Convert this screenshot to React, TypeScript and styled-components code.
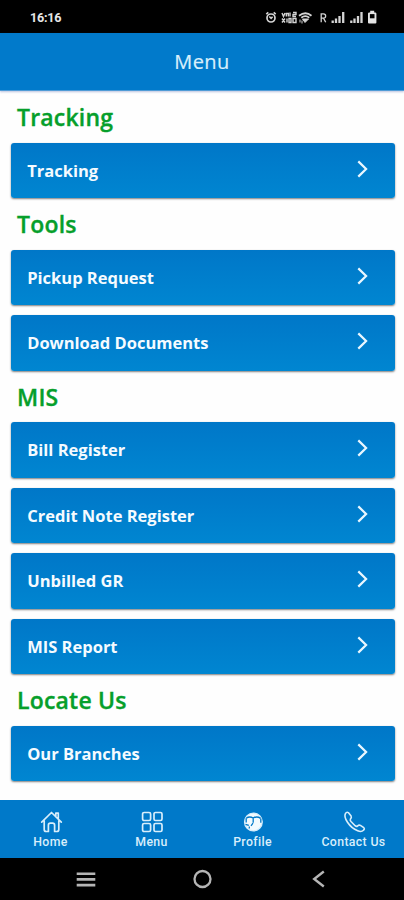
import React from "react";
import styled, { createGlobalStyle } from "styled-components";

const GlobalStyle = createGlobalStyle`
  * { box-sizing: border-box; }
  body { margin: 0; background: #fefefe; }
`;

const Screen = styled.div`
  display: flex;
  flex-direction: column;
  width: 404px;
  height: 900px;
  overflow: hidden;
  background: #fefefe;
  font-family: "Open Sans", "Noto Sans", sans-serif;
`;

const StatusBar = styled.div`
  flex: none;
  height: 33px;
  display: flex;
  align-items: center;
  justify-content: space-between;
  padding: 2px 27px 0 30px;
  background: #000;
`;

const Clock = styled.span`
  color: #e6e6e6;
  font: 700 12.6px/16px Roboto, sans-serif;
  letter-spacing: -0.25px;
`;

const StatusIcons = styled.svg`
  display: block;
  width: 112px;
  height: 16px;
`;

const Header = styled.header`
  flex: none;
  height: 58px;
  display: flex;
  align-items: center;
  justify-content: center;
  background: #017acb;
  border-bottom: 1px solid #4f9bd6;
  box-shadow: 0 1px 2px rgba(60, 80, 160, 0.35);
  color: #d9effb;
  font-size: 20px;
  letter-spacing: 0.45px;
  -webkit-text-stroke: 0.2px currentColor;
`;

const Content = styled.main`
  flex: 1;
  min-height: 0;
  padding: 0.3px 9.5px 0 11px;
`;

const SectionTitle = styled.h2`
  margin: 0;
  height: 51.6px;
  padding: 0 0 0 6px;
  color: #069f2b;
  font-size: 23px;
  font-weight: 600;
  line-height: 52px;
  letter-spacing: 0.2px;
  -webkit-text-stroke: 0.35px currentColor;
`;

const Items = styled.div`
  display: flex;
  flex-direction: column;
  gap: 10.15px;
`;

const ItemButton = styled.button`
  display: flex;
  align-items: center;
  justify-content: space-between;
  width: 100%;
  height: 55.4px;
  padding: 0 25.5px 0 16.2px;
  border: 0;
  border-radius: 3px;
  background: linear-gradient(#0077c8, #0086d1);
  box-shadow: 0 1px 2px rgba(0, 0, 0, 0.5);
  color: #f5fbff;
  font: 700 16.5px/24px "Open Sans", sans-serif;
  text-align: left;
`;

const Chevron = styled.svg`
  width: 13px;
  height: 18px;
  margin-top: -4px;
`;

const TabBar = styled.nav`
  flex: none;
  height: 58px;
  display: grid;
  grid-template-columns: repeat(4, 1fr);
  background: #0079c9;
`;

const Tab = styled.a`
  display: flex;
  flex-direction: column;
  align-items: center;
  padding-top: 9.5px;
  color: #d8eefb;
  font: 500 12.3px/16px Roboto, sans-serif;
  letter-spacing: 0.35px;
  white-space: nowrap;
`;

const TabIcon = styled.svg`
  width: 24px;
  height: 24px;
`;

const SystemBar = styled.div`
  flex: none;
  height: 42px;
  display: grid;
  grid-template-columns: 172px 60px 172px;
  align-items: center;
  justify-items: center;
  background: #000;
`;

const SystemIcon = styled.svg`
  width: 24px;
  height: 24px;
`;

const sections = [
  { title: "Tracking", items: ["Tracking"] },
  { title: "Tools", items: ["Pickup Request", "Download Documents"] },
  { title: "MIS", items: ["Bill Register", "Credit Note Register", "Unbilled GR", "MIS Report"] },
  { title: "Locate Us", items: ["Our Branches"] },
];

const StatusGlyphs = () => (
  <StatusIcons viewBox="265 9.5 112 16" fill="none" stroke="#d4d4d4">
    <circle cx="271" cy="17.5" r="4" strokeWidth="1.7" />
    <path d="M266.3 13.7l2-1.8M275.7 13.7l-2-1.8M269.3 16l1.8 1.8 1.5-1.6" strokeWidth="1.6" />
    <path d="M282 12.5l1.5 3.5 1.5-3.5M286.3 16v-3h2v3M290 12v4M293 12h3v2h-3v2h3M282 18l3 4M285 18l-3 4M287 18v4M289 18h2v4h-2zM293 18v4h3v-4z" strokeWidth="1.4" />
    <path d="M299 15.2q6.5-5 12.5 0M301.3 17.2q4-3 8 0" strokeWidth="1.8" />
    <path d="M302.5 18.5h6L305 22zM300 19v3M302 20v3" fill="#d4d4d4" strokeWidth="1" />
    <path d="M321.2 21.8v-8.5h2.3a2 2 0 0 1 0 4.3h-2.3M323.5 17.6l2.2 4.2" strokeWidth="1.3" />
    <path d="M332.7 20v2.5M336 18v4.5M339.5 15.5v7M343.2 11.5v11M351.3 20v2.5M354.5 18v4.5M358 15.5v7M361.5 11.5v11" strokeWidth="2.3" />
    <path d="M370.2 10.3h4v1.7h1a1.2 1.2 0 0 1 1.2 1v9a1 1 0 0 1-1 1h-6.4a1 1 0 0 1-1-1v-9a1.2 1.2 0 0 1 1.2-1h1z" fill="#e4e4e4" stroke="none" />
    <rect x="369.9" y="13.6" width="4.6" height="4.2" fill="#000" stroke="none" />
  </StatusIcons>
);

const HomeIcon = () => (
  <TabIcon viewBox="-0.5 0 24 24" fill="none" stroke="currentColor" strokeWidth="1.7" strokeLinecap="round" strokeLinejoin="round">
    <path d="M2.2 12.2 12 2.5l9.8 9.7M16.3 5.8V3.2h2.5v5.2M4.7 10.5v9q0 2 2 2h2.2v-6.3q0-2 2-2h2.2q2 0 2 2v6.3h2.2q2 0 2-2v-9" />
  </TabIcon>
);

const GridIcon = () => (
  <TabIcon viewBox="0 -0.5 24 24" fill="none" stroke="currentColor" strokeWidth="1.7">
    <rect x="2.6" y="2" width="8" height="8" rx="1.5" />
    <rect x="14" y="2" width="8" height="8" rx="1.5" />
    <rect x="2.6" y="13" width="8" height="8" rx="1.5" />
    <rect x="14" y="13" width="8" height="8" rx="1.5" />
  </TabIcon>
);

const ProfileIcon = () => (
  <TabIcon viewBox="0 0 24 24">
    <circle cx="12.4" cy="12" r="8.9" fill="#f2fbff" stroke="#d8eefb" strokeWidth="1.2" />
    <path d="M5.2 8.3Q8.5 5.9 12.2 8Q16 5.9 19.6 8.3" fill="none" stroke="#0079c9" strokeWidth="1.4" />
    <path d="M5.2 8.3v4.3M12.2 8.2v4.6M19.8 8.6v4.2M4.5 14.3l3.3 1.1M8.3 16.4v2.2M12 13.2l-2 2.6" fill="none" stroke="#0079c9" strokeWidth="1.3" />
  </TabIcon>
);

const PhoneIcon = () => (
  <TabIcon viewBox="-0.5 0 24 24" fill="none" stroke="currentColor" strokeWidth="1.6" strokeLinejoin="round">
    <path d="M3 3.4Q4.2 1.6 5.8 2.6L8.6 6.1Q9.4 7.4 7.9 9.1Q7.3 10.2 8.5 11.5L12.6 15.7Q13.9 16.8 15 16Q16.5 14.6 17.9 15.4L21.3 17.7Q22.5 18.9 21 20.2Q18.8 22.4 15.2 20.7Q9 18.4 5 12.3Q1.2 6.7 3 3.4Z" />
  </TabIcon>
);

const tabs = [
  { label: "Home", Icon: HomeIcon },
  { label: "Menu", Icon: GridIcon },
  { label: "Profile", Icon: ProfileIcon },
  { label: "Contact Us", Icon: PhoneIcon },
];

export default function App() {
  return (
    <Screen>
      <GlobalStyle />
      <StatusBar>
        <Clock>16:16</Clock>
        <StatusGlyphs />
      </StatusBar>
      <Header>Menu</Header>
      <Content>
        {sections.map((section) => (
          <section key={section.title}>
            <SectionTitle>{section.title}</SectionTitle>
            <Items>
              {section.items.map((item) => (
                <ItemButton key={item}>
                  {item}
                  <Chevron viewBox="0 0 13 18" fill="none" stroke="#e9f7ff" strokeWidth="2.2">
                    <path d="M2.3 1.4 10.1 9l-7.8 7.6" />
                  </Chevron>
                </ItemButton>
              ))}
            </Items>
          </section>
        ))}
      </Content>
      <TabBar>
        {tabs.map(({ label, Icon }) => (
          <Tab key={label}>
            <Icon />
            {label}
          </Tab>
        ))}
      </TabBar>
      <SystemBar>
        <SystemIcon viewBox="0 0 24 24" stroke="#b5b5b5" strokeWidth="2.6">
          <path d="M2.7 6.7h18.6M2.7 12.4h18.6M2.7 18.1h18.6" />
        </SystemIcon>
        <SystemIcon viewBox="-0.5 0 24 24" fill="none" stroke="#b5b5b5" strokeWidth="2.3">
          <circle cx="12" cy="12" r="8" />
        </SystemIcon>
        <SystemIcon viewBox="-0.5 0 24 24" fill="none" stroke="#b5b5b5" strokeWidth="2.4">
          <path d="M17.3 4.5 7.7 12l9.6 7.5" />
        </SystemIcon>
      </SystemBar>
    </Screen>
  );
}
